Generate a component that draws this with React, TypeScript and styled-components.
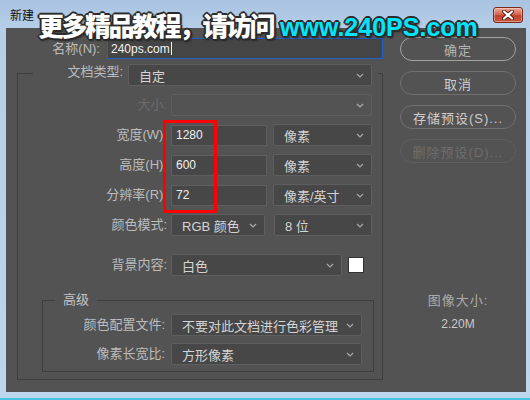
import React from 'react';
import styled, { createGlobalStyle } from 'styled-components';

const sans = `'Liberation Sans', 'Noto Sans CJK SC', sans-serif`;

const GlobalStyle = createGlobalStyle`
  html, body {
    margin: 0;
    padding: 0;
  }
  body {
    width: 530px;
    height: 400px;
    overflow: hidden;
    background: #bcd4ec;
    font-family: ${sans};
  }
`;

const Window = styled.div`
  position: relative;
  box-sizing: border-box;
  width: 530px;
  height: 400px;
  display: flex;
  flex-direction: column;
  background: linear-gradient(180deg, #a8c3e1 0px, #b6cee8 30px, #bdd5ed 100%);
  border-bottom: 2px solid #46c3e3;
`;

const TitleBar = styled.div`
  height: 28px;
  flex: none;
  display: flex;
  justify-content: space-between;
  align-items: flex-start;
  padding: 0 7px 0 10px;
`;

const Title = styled.span`
  margin-top: 9px;
  font-size: 12px;
  line-height: 14px;
  color: #111;
`;

const CloseButton = styled.button`
  box-sizing: border-box;
  margin-top: 7px;
  width: 30px;
  height: 16px;
  padding: 0;
  display: flex;
  align-items: center;
  justify-content: center;
  border: 1px solid #7b2b1f;
  border-radius: 3px;
  background: linear-gradient(180deg, #eaa898 0%, #d66a55 45%, #c2402a 55%, #c85a3f 100%);
  box-shadow: inset 0 0 0 1px rgba(255, 255, 255, 0.35);
`;

const Client = styled.div`
  flex: none;
  height: 364px;
  margin: 0 4px 0 6px;
  background: #535353;
  display: flex;
`;

const FormColumn = styled.div`
  width: 366px;
  padding: 10px 0 0 11px;
`;

const NameRow = styled.div`
  display: flex;
  align-items: center;
  gap: 7px;
`;

const Label = styled.span<{ $w: number; $dim?: boolean }>`
  width: ${(p) => p.$w}px;
  flex: none;
  text-align: right;
  white-space: nowrap;
  font-size: 13px;
  line-height: 16px;
  color: ${(p) => (p.$dim ? '#6c6c6c' : '#bcbcbc')};
`;

const NameInput = styled.div`
  box-sizing: border-box;
  width: 276px;
  height: 21px;
  display: flex;
  align-items: center;
  padding-left: 3px;
  background: #454545;
  border: 1px solid #1f5fc6;
  font-size: 12px;
  color: #f2f2f2;
`;

const Caret = styled.span`
  width: 1px;
  height: 13px;
  margin-left: 1px;
  background: #f2f2f2;
`;

const Group = styled.fieldset`
  box-sizing: border-box;
  width: 366px;
  margin: 5px 0 0;
  padding: 12px 10px 7px 15px;
  border: 1px solid #3e3e3e;
  min-width: 0;
`;

const GroupLegend = styled.legend`
  display: flex;
  align-items: flex-start;
  gap: 5px;
  height: 18px;
  padding: 0 6px 0 0;
`;

const Rows = styled.div`
  display: flex;
  flex-direction: column;
  gap: 8px;
`;

const Row = styled.div<{ $gapTop?: number }>`
  display: flex;
  align-items: center;
  gap: 4px;
  margin-top: ${(p) => p.$gapTop ?? 0}px;
`;

const Controls = styled.div<{ $gap: number }>`
  display: flex;
  align-items: center;
  gap: ${(p) => p.$gap}px;
`;

const Select = styled.div<{ $w: number; $disabled?: boolean }>`
  box-sizing: border-box;
  width: ${(p) => p.$w}px;
  height: 22px;
  flex: none;
  display: flex;
  align-items: center;
  justify-content: space-between;
  gap: 4px;
  padding: 0 7px 0 10px;
  background: ${(p) => (p.$disabled ? '#535353' : '#474747')};
  border: 1px solid #5e5e5e;
  border-radius: 2px;
  font-size: 13px;
  color: #d4d4d4;
  white-space: nowrap;
  overflow: hidden;

  svg {
    flex: none;
  }
`;

const Field = styled.div<{ $w: number }>`
  box-sizing: border-box;
  width: ${(p) => p.$w}px;
  height: 21px;
  flex: none;
  display: flex;
  align-items: center;
  padding-left: 4px;
  background: #474747;
  border: 1px solid #5e5e5e;
  font-size: 12px;
  color: #f0f0f0;
`;

const Swatch = styled.span`
  box-sizing: border-box;
  width: 16px;
  height: 16px;
  background: #fff;
  border: 1px solid #333;
`;

const SubGroup = styled.fieldset`
  box-sizing: border-box;
  width: 332px;
  margin: 15px 0 0 9px;
  padding: 5px 10px 6px 12px;
  border: 1px solid #3e3e3e;
  min-width: 0;
`;

const SubLegend = styled.legend`
  padding: 0 8px;
  font-size: 13px;
  line-height: 18px;
  color: #c4c4c4;
`;

const SubRow = styled.div`
  display: flex;
  align-items: center;
  gap: 6px;
`;

const SubRows = styled.div`
  display: flex;
  flex-direction: column;
  gap: 7px;
`;

const SideColumn = styled.div`
  width: 116px;
  margin-left: 17px;
  padding-top: 9px;
  display: flex;
  flex-direction: column;
  gap: 10px;
`;

const PillButton = styled.button<{ $tone: 'default' | 'normal' | 'disabled' }>`
  box-sizing: border-box;
  height: 24px;
  padding: 0;
  border-radius: 12px;
  background: #535353;
  border: 1px solid
    ${(p) => (p.$tone === 'default' ? '#a2a2a2' : p.$tone === 'normal' ? '#707070' : '#5f5f5f')};
  color: ${(p) => (p.$tone === 'disabled' ? '#6d6d6d' : p.$tone === 'default' ? '#b4b4b4' : '#cdcdcd')};
  font-family: ${sans};
  font-size: 13px;
  letter-spacing: 1px;
`;

const SizeInfo = styled.div`
  margin-top: 120px;
  display: flex;
  flex-direction: column;
  align-items: center;
  gap: 7px;
  font-size: 13px;
  line-height: 16px;
`;

const SizeLabel = styled.span`
  color: #ababab;
  letter-spacing: 1px;
`;

const SizeValue = styled.span`
  color: #cacaca;
  font-size: 12px;
`;

const Watermark = styled.div`
  position: absolute;
  left: 38px;
  top: 12px;
  display: flex;
  align-items: baseline;
  gap: 7px;
  white-space: nowrap;
  pointer-events: none;
  text-shadow: 1px 1px 0 #2b2b2b, -1px -1px 0 #2b2b2b, 1px -1px 0 #2b2b2b, -1px 1px 0 #2b2b2b,
    0 2px 0 #2b2b2b, 2px 0 0 #2b2b2b, 0 -2px 0 #2b2b2b, -2px 0 0 #2b2b2b, 2px 2px 2px rgba(0, 0, 0, 0.5);
`;

const WatermarkCn = styled.span`
  font-family: 'Noto Sans CJK SC', sans-serif;
  font-weight: 900;
  font-size: 26px;
  line-height: 26px;
  letter-spacing: -2.5px;
  color: #fff;
`;

const WatermarkUrl = styled.span`
  font-family: 'Liberation Sans', sans-serif;
  font-weight: 700;
  font-size: 25px;
  line-height: 26px;
  color: #00e6ff;
`;

const Highlight = styled.div`
  position: absolute;
  left: 163px;
  top: 120px;
  width: 54px;
  height: 93px;
  box-sizing: border-box;
  border: 3px solid #ff0000;
  pointer-events: none;
`;

const Chevron = () => (
  <svg width="8" height="5" viewBox="0 0 8 5">
    <path d="M1 1l3 3 3-3" fill="none" stroke="#a9a9a9" strokeWidth="1.2" />
  </svg>
);

const CloseIcon = () => (
  <svg width="12" height="10" viewBox="0 0 12 10">
    <path d="M2 1.5l8 7M10 1.5l-8 7" stroke="#5a1a12" strokeWidth="4" strokeLinecap="round" />
    <path d="M2 1.5l8 7M10 1.5l-8 7" stroke="#fff" strokeWidth="2.2" strokeLinecap="round" />
  </svg>
);

export default function App() {
  return (
    <>
      <GlobalStyle />
      <Window>
        <TitleBar>
          <Title>新建</Title>
          <CloseButton type="button" aria-label="关闭">
            <CloseIcon />
          </CloseButton>
        </TitleBar>

        <Client>
          <FormColumn>
            <NameRow>
              <Label $w={83}>名称(N):</Label>
              <NameInput>
                240ps.com
                <Caret />
              </NameInput>
            </NameRow>

            <Group>
              <GroupLegend>
                <Label $w={90}>文档类型:</Label>
                <Select $w={244}>
                  自定
                  <Chevron />
                </Select>
              </GroupLegend>

              <Rows>
                <Row>
                  <Label $w={134} $dim>
                    大小:
                  </Label>
                  <Select $w={201} $disabled>
                    <span />
                    <Chevron />
                  </Select>
                </Row>
                <Row>
                  <Label $w={134}>宽度(W):</Label>
                  <Controls $gap={6}>
                    <Field $w={96}>1280</Field>
                    <Select $w={99}>
                      像素
                      <Chevron />
                    </Select>
                  </Controls>
                </Row>
                <Row>
                  <Label $w={134}>高度(H):</Label>
                  <Controls $gap={6}>
                    <Field $w={96}>600</Field>
                    <Select $w={99}>
                      像素
                      <Chevron />
                    </Select>
                  </Controls>
                </Row>
                <Row>
                  <Label $w={134}>分辨率(R):</Label>
                  <Controls $gap={6}>
                    <Field $w={96}>72</Field>
                    <Select $w={99}>
                      像素/英寸
                      <Chevron />
                    </Select>
                  </Controls>
                </Row>
                <Row>
                  <Label $w={134}>颜色模式:</Label>
                  <Controls $gap={9}>
                    <Select $w={94}>
                      RGB 颜色
                      <Chevron />
                    </Select>
                    <Select $w={98}>
                      8 位
                      <Chevron />
                    </Select>
                  </Controls>
                </Row>
                <Row $gapTop={10}>
                  <Label $w={134}>背景内容:</Label>
                  <Controls $gap={6}>
                    <Select $w={171}>
                      白色
                      <Chevron />
                    </Select>
                    <Swatch />
                  </Controls>
                </Row>
              </Rows>

              <SubGroup>
                <SubLegend>高级</SubLegend>
                <SubRows>
                  <SubRow>
                    <Label $w={110}>颜色配置文件:</Label>
                    <Select $w={191}>
                      不要对此文档进行色彩管理
                      <Chevron />
                    </Select>
                  </SubRow>
                  <SubRow>
                    <Label $w={110}>像素长宽比:</Label>
                    <Select $w={191}>
                      方形像素
                      <Chevron />
                    </Select>
                  </SubRow>
                </SubRows>
              </SubGroup>
            </Group>
          </FormColumn>

          <SideColumn>
            <PillButton type="button" $tone="default">确定</PillButton>
            <PillButton type="button" $tone="normal">取消</PillButton>
            <PillButton type="button" $tone="normal">存储预设(S)...</PillButton>
            <PillButton type="button" $tone="disabled" disabled>
              删除预设(D)...
            </PillButton>
            <SizeInfo>
              <SizeLabel>图像大小:</SizeLabel>
              <SizeValue>2.20M</SizeValue>
            </SizeInfo>
          </SideColumn>
        </Client>

        <Watermark>
          <WatermarkCn>更多精品教程，请访问</WatermarkCn>
          <WatermarkUrl>www.240PS.com</WatermarkUrl>
        </Watermark>
        <Highlight />
      </Window>
    </>
  );
}
